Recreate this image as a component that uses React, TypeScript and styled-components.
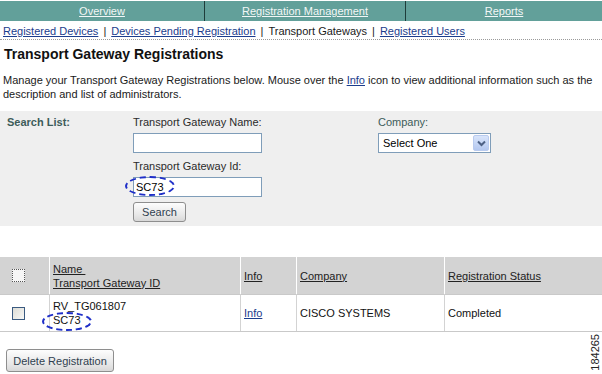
import React from "react";
import styled, { createGlobalStyle } from "styled-components";

const Global = createGlobalStyle`
  html, body { margin: 0; padding: 0; background: #fff; }
  body { font-family: "Liberation Sans", Arial, sans-serif; font-size: 11px; color: #1a1a1a; }
  * { box-sizing: border-box; }
`;

const Page = styled.div`
  position: relative;
  width: 602px;
  height: 374px;
  overflow: hidden;
  padding-top: 1px;
`;

const NavBar = styled.div`
  display: grid;
  grid-template-columns: 204px 1px 200px 1px 1fr;
  height: 20px;
  background: #62a09a;
`;

const NavCell = styled.div`
  display: flex;
  align-items: center;
  justify-content: center;
  color: #f2f7f6;
  text-decoration: underline;
  font-size: 11px;
`;

const NavDivider = styled.div`
  background: #1e3c3a;
`;

const SubNav = styled.div`
  display: flex;
  align-items: center;
  height: 19px;
  padding: 1px 3px 0;
  border-bottom: 1px dotted #9a9a9a;
  font-size: 11px;
  white-space: nowrap;
`;

const Link = styled.a`
  color: #1b3c8c;
  text-decoration: underline;
  cursor: pointer;
`;

const Sep = styled.span`
  margin: 0 5px;
  color: #222;
`;

const Title = styled.h1`
  margin: 6px 0 0 4px;
  font-size: 14px;
  line-height: 17px;
  font-weight: bold;
  color: #111;
`;

const Desc = styled.p`
  margin: 10px 0 0 3px;
  font-size: 11px;
  line-height: 14px;
  color: #1a1a1a;
`;

const SearchPanel = styled.div`
  margin-top: 10px;
  height: 115px;
  background: #efefef;
  display: grid;
  grid-template-columns: 133px 245px 1fr;
  padding-top: 4px;
`;

const SearchTitle = styled.div`
  padding-left: 7px;
  font-weight: bold;
  color: #3d5c5a;
  font-size: 11px;
  line-height: 14px;
`;

const FieldCol = styled.div`
  display: flex;
  flex-direction: column;
  align-items: flex-start;
`;

const Label = styled.div<{ $teal?: boolean }>`
  font-size: 11px;
  color: ${(p) => (p.$teal ? "#3d5c5a" : "#2b2b2b")};
  height: 14px;
  line-height: 14px;
`;

const InputWrap = styled.div`
  position: relative;
  margin: 4px 0 0;
  width: 129px;
  height: 20px;
`;

const Input = styled.div`
  width: 129px;
  height: 20px;
  border: 1px solid #7f9db9;
  background: #fff;
  font-size: 11px;
  line-height: 18px;
  padding-left: 2px;
  color: #000;
`;

const Gap = styled.div<{ $h: number }>`
  height: ${(p) => p.$h}px;
`;

const Ellipse = styled.div<{ $l: number; $t: number; $w: number; $h: number }>`
  position: absolute;
  left: ${(p) => p.$l}px;
  top: ${(p) => p.$t}px;
  width: ${(p) => p.$w}px;
  height: ${(p) => p.$h}px;
  border: 2px dashed #1f2fc8;
  border-radius: 50%;
  pointer-events: none;
`;

const Button = styled.div`
  display: inline-flex;
  align-items: center;
  justify-content: center;
  height: 20px;
  padding: 0 7px;
  border: 1px solid #8e8e8e;
  border-radius: 3px;
  background: linear-gradient(#fdfdfd, #e6e6e6 70%, #d8d8d8);
  font-size: 11px;
  color: #2f3f4f;
  white-space: nowrap;
`;

const SearchButton = styled(Button)`
  margin-top: 5px;
  width: 53px;
`;

const Select = styled.div`
  margin-top: 4px;
  width: 113px;
  height: 20px;
  border: 1px solid #7f9db9;
  background: #fff;
  display: flex;
  align-items: center;
  justify-content: space-between;
  padding: 1px 1px 1px 4px;
  font-size: 11px;
  color: #000;
`;

const SelectArrow = styled.div`
  width: 16px;
  height: 16px;
  background: linear-gradient(#d9e5fb, #b4c8f0);
  border: 1px solid #b9cbef;
  border-radius: 2px;
  display: flex;
  align-items: center;
  justify-content: center;
`;

const Table = styled.div`
  margin-top: 31px;
  display: grid;
  grid-template-columns: 49px 190px 55px 147px 1fr;
  column-gap: 1px;
  border-bottom: 1px solid #c9c9c9;
`;

const HeadCell = styled.div<{ $check?: boolean }>`
  background: #d3d3d3;
  height: 37px;
  display: flex;
  flex-direction: column;
  justify-content: center;
  align-items: flex-start;
  padding-left: ${(p) => (p.$check ? 12 : 3)}px;
  font-size: 11px;
  line-height: 14px;
  color: #222;
  text-decoration: underline;
`;

const RowCell = styled.div<{ $check?: boolean }>`
  position: relative;
  height: 37px;
  border-top: 1px solid #c9c9c9;
  display: flex;
  flex-direction: column;
  justify-content: center;
  align-items: flex-start;
  padding-left: ${(p) => (p.$check ? 12 : 3)}px;
  font-size: 11px;
  line-height: 14px;
  color: #111;
`;

const DividedCell = styled(RowCell)`
  box-shadow: -1px 0 0 #d3d3d3;
`;

const Checkbox = styled.div<{ $focus?: boolean }>`
  width: 13px;
  height: 13px;
  background: ${(p) => (p.$focus ? "#f6f6f6" : "linear-gradient(135deg, #dcdcd6, #f8f8f6)")};
  border: 1px ${(p) => (p.$focus ? "dotted #555" : "solid #3a5a80")};
`;

const Footer = styled.div`
  padding: 17px 0 0 6px;
`;

const DeleteButton = styled(Button)`
  width: 108px;
  height: 23px;
`;

const FigNum = styled.div`
  position: absolute;
  right: 1px;
  bottom: 3px;
  writing-mode: vertical-rl;
  transform: rotate(180deg);
  font-size: 11px;
  color: #222;
  line-height: 11px;
`;

export default function App() {
  return (
    <>
      <Global />
      <Page>
        <NavBar>
          <NavCell>Overview</NavCell>
          <NavDivider />
          <NavCell>Registration Management</NavCell>
          <NavDivider />
          <NavCell>Reports</NavCell>
        </NavBar>
        <SubNav>
          <Link>Registered Devices</Link>
          <Sep>|</Sep>
          <Link>Devices Pending Registration</Link>
          <Sep>|</Sep>
          <span>Transport Gateways</span>
          <Sep>|</Sep>
          <Link>Registered Users</Link>
        </SubNav>
        <Title>Transport Gateway Registrations</Title>
        <Desc>
          Manage your Transport Gateway Registrations below. Mouse over the <Link>Info</Link> icon to view additional
          information such as the description and list of administrators.
        </Desc>
        <SearchPanel>
          <SearchTitle>Search List:</SearchTitle>
          <FieldCol>
            <Label>Transport Gateway Name:</Label>
            <InputWrap>
              <Input />
            </InputWrap>
            <Gap $h={6} />
            <Label>Transport Gateway Id:</Label>
            <InputWrap>
              <Input>SC73</Input>
              <Ellipse $l={-8} $t={-1} $w={50} $h={20} />
            </InputWrap>
            <SearchButton>Search</SearchButton>
          </FieldCol>
          <FieldCol>
            <Label $teal>Company:</Label>
            <Select>
              <span>Select One</span>
              <SelectArrow>
                <svg width="9" height="7" viewBox="0 0 9 7">
                  <path d="M1 1.5 L4.5 5 L8 1.5" fill="none" stroke="#4d6185" strokeWidth="2" />
                </svg>
              </SelectArrow>
            </Select>
          </FieldCol>
        </SearchPanel>
        <Table>
          <HeadCell $check>
            <Checkbox $focus />
          </HeadCell>
          <HeadCell>
            <span>Name&nbsp;</span>
            <span>Transport Gateway ID</span>
          </HeadCell>
          <HeadCell>Info</HeadCell>
          <HeadCell>Company</HeadCell>
          <HeadCell>Registration Status</HeadCell>

          <RowCell $check>
            <Checkbox />
          </RowCell>
          <DividedCell>
            <span>RV_TG061807</span>
            <span>SC73</span>
            <Ellipse $l={-8} $t={17} $w={50} $h={19} />
          </DividedCell>
          <DividedCell>
            <Link>Info</Link>
          </DividedCell>
          <DividedCell>CISCO SYSTEMS</DividedCell>
          <DividedCell>Completed</DividedCell>
        </Table>
        <Footer>
          <DeleteButton>Delete Registration</DeleteButton>
        </Footer>
        <FigNum>184265</FigNum>
      </Page>
    </>
  );
}
